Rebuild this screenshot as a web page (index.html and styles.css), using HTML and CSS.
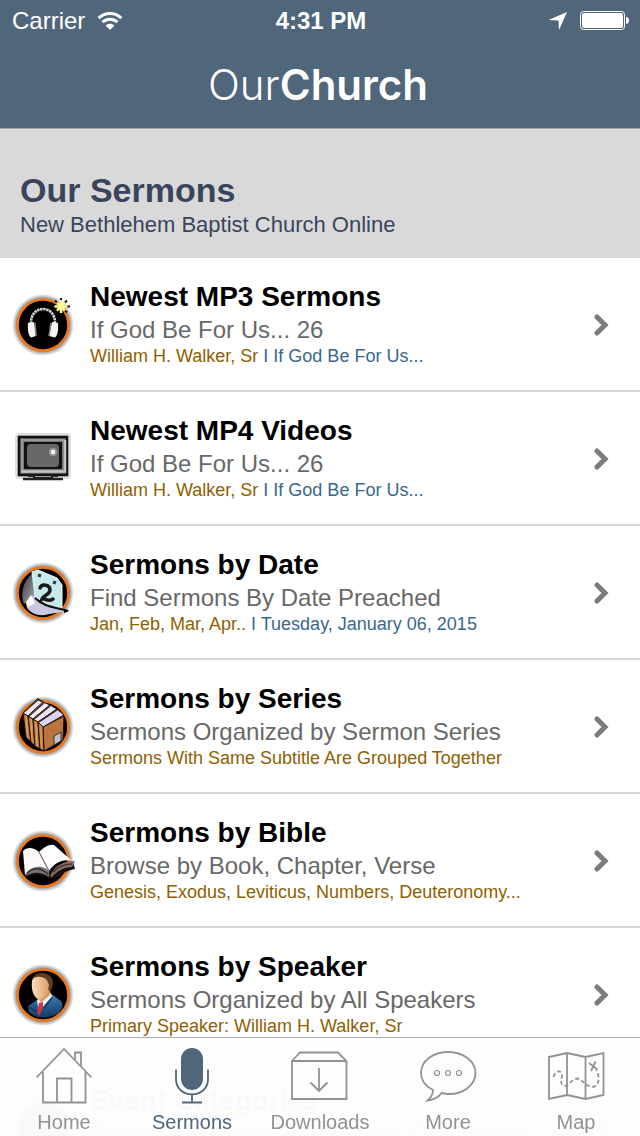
FILE: index.html
```html
<!DOCTYPE html>
<html lang="en">
<head>
  <meta charset="UTF-8">
  <meta name="viewport" content="width=device-width, initial-scale=1.0">
  <title>OurChurch - Our Sermons</title>
  <link rel="stylesheet" href="styles.css">
</head>
<body>
  <!-- shared shapes -->
  <svg class="defs" width="0" height="0" aria-hidden="true">
    <defs>
      <radialGradient id="glow">
        <stop offset="0.84" stop-color="#000" stop-opacity="0.45"/>
        <stop offset="1" stop-color="#000" stop-opacity="0"/>
      </radialGradient>
      <linearGradient id="leather" x1="0" y1="0" x2="1" y2="0">
        <stop offset="0" stop-color="#9a5c2c"/>
        <stop offset="0.5" stop-color="#dc9a5c"/>
        <stop offset="1" stop-color="#a0622f"/>
      </linearGradient>
      <linearGradient id="suit" x1="0" y1="0" x2="0" y2="1">
        <stop offset="0" stop-color="#3f83b8"/>
        <stop offset="1" stop-color="#123a63"/>
      </linearGradient>
      <linearGradient id="face" x1="0" y1="0" x2="1" y2="0">
        <stop offset="0" stop-color="#ffe0bd"/>
        <stop offset="1" stop-color="#dc9c68"/>
      </linearGradient>
      <linearGradient id="fold" x1="0" y1="0" x2="1" y2="1">
        <stop offset="0" stop-color="#3c3c40"/>
        <stop offset="1" stop-color="#a8a8ac"/>
      </linearGradient>
      <g id="badge">
        <circle cx="32" cy="33" r="31" fill="url(#glow)"/>
        <circle cx="32" cy="33" r="25.5" fill="#000" stroke="#ee7a1c" stroke-width="2.6"/>
      </g>
      <path id="chevron" d="M3 5 L11 13 L3 21" fill="none" stroke="#7b7b7b" stroke-width="5" stroke-linecap="round" stroke-linejoin="miter"/>
    </defs>
  </svg>

  <header class="header">
    <div class="status-bar">
      <div class="status-left">
        <span>Carrier</span>
        <svg width="26" height="20" viewBox="0 0 26 20" fill="none" stroke="#fff" stroke-width="3">
          <path d="M1.500 7.200 C8 0.900 18 0.900 24.500 7.200"/>
          <path d="M5.500 11.200 C9.800 7.200 16.200 7.200 20.500 11.200"/>
          <path d="M13 19 L8.500 14.500 C11 12.200 15 12.200 17.500 14.500 Z" fill="#fff" stroke="none"/>
        </svg>
      </div>
      <span class="status-time">4:31 PM</span>
      <div class="status-right">
        <svg width="20" height="20" viewBox="0 0 20 20">
          <path d="M19 1 L11 19 L10.500 9.500 L0.500 9 Z" fill="#fff"/>
        </svg>
        <svg width="50" height="20" viewBox="0 0 50 20">
          <rect x="0.500" y="0.500" width="44" height="18" rx="3" fill="none" stroke="#fff"/>
          <rect x="2" y="2" width="41" height="15" rx="2" fill="#fff"/>
          <path d="M46 6 C50 6 50 13 46 13 Z" fill="#fff"/>
        </svg>
      </div>
    </div>
    <div class="logo">Our<b>Church</b></div>
  </header>

  <main>
    <section class="page-title">
      <h1>Our Sermons</h1>
      <p>New Bethlehem Baptist Church Online</p>
    </section>

    <ul class="list">
      <li>
        <a class="row" href="#newest-mp3">
          <svg class="row-icon" viewBox="0 0 64 64">
            <use href="#badge"/>
            <path d="M20 32 C19 12 45 12 44 32" fill="none" stroke="#d8d8d8" stroke-width="2.600" stroke-dasharray="2.500 0.600"/>
            <path d="M17 31 L23 30 L25 44 L20 45.500 C17 43 16.500 37 17 31 Z" fill="#f4f4f4"/>
            <path d="M47 31 L41 30 L38 44 L44 45.500 C47 43 47.500 37 47 31 Z" fill="#f4f4f4"/>
            <path d="M24 31 L25 44 M40 31 L38 44" stroke="#888" stroke-width="1.500"/>
            <path d="M50 6 V23 M41 14.500 H59 M44 8.500 L56 20.500 M56 8.500 L44 20.500" stroke="#111" stroke-width="2"/>
            <path d="M50 8 V21 M43.500 14.500 H56.500 M46 10.500 L54 18.500 M54 10.500 L46 18.500" stroke="#fff79a" stroke-width="2.600"/>
          </svg>
          <div class="row-text">
            <h2>Newest MP3 Sermons</h2>
            <p class="subtitle">If God Be For Us... 26</p>
            <p class="meta">William H. Walker, Sr <span>I If God Be For Us...</span></p>
          </div>
          <svg class="chevron" viewBox="0 0 16 24"><use href="#chevron"/></svg>
        </a>
      </li>
      <li>
        <a class="row" href="#newest-mp4">
          <svg class="row-icon" viewBox="0 0 64 64">
            <rect x="4" y="7" width="56" height="46" rx="4" fill="#000" opacity="0.120"/>
            <rect x="8" y="11" width="48" height="38" fill="#777" stroke="#111" stroke-width="2.600"/>
            <path d="M11 47 V14 H54" fill="none" stroke="#999" stroke-width="2"/>
            <path d="M10.500 45.500 H54 V14" fill="none" stroke="#c4c4c4" stroke-width="2.500"/>
            <rect x="13" y="16" width="38" height="27" fill="#111"/>
            <rect x="16" y="18" width="32" height="23" rx="4" fill="#686868"/>
            <circle cx="42" cy="26" r="4" fill="#999"/>
            <circle cx="42" cy="26" r="2.200" fill="#fff"/>
            <path d="M17 50 H23 V52 H41 V50 H47" fill="none" stroke="#222" stroke-width="2"/>
            <path d="M12 53 H52" stroke="#222" stroke-width="2.600"/>
          </svg>
          <div class="row-text">
            <h2>Newest MP4 Videos</h2>
            <p class="subtitle">If God Be For Us... 26</p>
            <p class="meta">William H. Walker, Sr <span>I If God Be For Us...</span></p>
          </div>
          <svg class="chevron" viewBox="0 0 16 24"><use href="#chevron"/></svg>
        </a>
      </li>
      <li>
        <a class="row" href="#by-date">
          <svg class="row-icon" viewBox="0 0 64 64">
            <use href="#badge"/>
            <path d="M21 14 L24 37 L13 44 C9 34 12 21 21 14 Z" fill="url(#fold)"/>
            <path d="M15 43 L21 35 L30 42 L58 51 L38 54 C28 57 21 54 16 48 Z" fill="#c9c8e0"/>
            <path d="M15 42 L20 35 L24 43 L17 47 Z" fill="#fff"/>
            <path d="M21 12 L27 10 L46 18 L51 25 L51 49 L38 45 L24 37 Z" fill="#c6e9ec" stroke="#e8fbfb" stroke-width="1"/>
            <path d="M24 38 C33 47 43 47 57 51" fill="none" stroke="#111" stroke-width="2"/>
            <path d="M27 15 L30 16 M42 22 L45 23" stroke="#333" stroke-width="3"/>
            <path d="M29 28 C31 23 39 25 39 30 C39 35 32 35 31 39 C34 37 36 43 42 39" fill="none" stroke="#1a1a1a" stroke-width="3.500" stroke-linecap="round"/>
            <path d="M53 49 L58 51 L53 53 Z" fill="#000"/>
          </svg>
          <div class="row-text">
            <h2>Sermons by Date</h2>
            <p class="subtitle">Find Sermons By Date Preached</p>
            <p class="meta">Jan, Feb, Mar, Apr.. <span>I Tuesday, January 06, 2015</span></p>
          </div>
          <svg class="chevron" viewBox="0 0 16 24"><use href="#chevron"/></svg>
        </a>
      </li>
      <li>
        <a class="row" href="#by-series">
          <svg class="row-icon" viewBox="0 0 64 64">
            <use href="#badge"/>
            <g stroke="#241206" stroke-width="1" stroke-linejoin="round">
              <path d="M32 33 L53 22 L52 46 L33 57 Z" fill="#b87540"/>
              <path d="M12 19 L17 22 L20 48 L15 43 Z" fill="url(#leather)"/>
              <path d="M17 22 L22 25 L24 52 L20 48 Z" fill="url(#leather)"/>
              <path d="M22 25 L27 28 L29 55 L24 52 Z" fill="url(#leather)"/>
              <path d="M27 28 L32 33 L33 57 L29 55 Z" fill="url(#leather)"/>
              <path d="M12 19 L27 6 L32 8 L17 22 Z" fill="#e6e3fb"/>
              <path d="M17 22 L32 8 L39 11 L22 25 Z" fill="#f1eefc"/>
              <path d="M22 25 L39 11 L46 15 L27 28 Z" fill="#e6e3fb"/>
              <path d="M27 28 L46 15 L53 21 L32 33 Z" fill="#dad6f5"/>
            </g>
            <path d="M13 18 L27 5 L32 8 M18 22 L33 9 M23 25 L39 12 M28 28 L46 16" fill="none" stroke="#4a2a14" stroke-width="1.500"/>
            <path d="M43 42 L50 38 V47 L43 51 Z" fill="#bfc3c7" stroke="#333" stroke-width="1"/>
          </svg>
          <div class="row-text">
            <h2>Sermons by Series</h2>
            <p class="subtitle">Sermons Organized by Sermon Series</p>
            <p class="meta">Sermons With Same Subtitle Are Grouped Together</p>
          </div>
          <svg class="chevron" viewBox="0 0 16 24"><use href="#chevron"/></svg>
        </a>
      </li>
      <li>
        <a class="row" href="#by-bible">
          <svg class="row-icon" viewBox="0 0 64 64">
            <use href="#badge"/>
            <path d="M15 49 C24 45 31 47 38 51 C46 52 51 43 64 41 L62 34 L36 39 L15 40 Z" fill="#17110f"/>
            <path d="M14 48 C19 37 31 36 38 43 L38 49 C29 43 22 44 14 48 Z" fill="#777074"/>
            <path d="M39 48 C44 37 53 33 64 33 L61 39 C53 39 46 43 41 49 Z" fill="#866b64"/>
            <path d="M12 23 C17 18 23 20 28 24 L38 43 C30 36 20 38 14 47 Z" fill="#fafafa"/>
            <path d="M28 24 C33 19 38 16 43 17 L60 32 C50 32 43 35 38 43 Z" fill="#fff"/>
            <path d="M28 24 L38 43" stroke="#8b6a68" stroke-width="1.200"/>
            <path d="M16 45 C23 39 30 40 37 46 M42 44 C48 38 54 36 61 36" fill="none" stroke="#2b2523" stroke-width="1.200"/>
          </svg>
          <div class="row-text">
            <h2>Sermons by Bible</h2>
            <p class="subtitle">Browse by Book, Chapter, Verse</p>
            <p class="meta">Genesis, Exodus, Leviticus, Numbers, Deuteronomy...</p>
          </div>
          <svg class="chevron" viewBox="0 0 16 24"><use href="#chevron"/></svg>
        </a>
      </li>
      <li>
        <a class="row" href="#by-speaker">
          <svg class="row-icon" viewBox="0 0 64 64">
            <use href="#badge"/>
            <path d="M17 44 L26 38 L39 31 L50 39 C53 44 51 48 46 52 C37 57 25 57 18 50 Z" fill="url(#suit)"/>
            <path d="M26 38 L39 30 L41 34 L31 46 L28 52 Z" fill="#f3f3f5"/>
            <path d="M28 41 L32 40 L32 46 L28 54 L26 50 Z" fill="#cf3440"/>
            <path d="M26 33 L39 26 L39 33 L30 41 Z" fill="#d99c69"/>
            <path d="M21 17 C24 10 34 9 39 14 C44 18 42 25 39 30 L34 22 Z" fill="#5f3d20"/>
            <path d="M21 19 C22 14 31 13 36 18 L38 23 C37 31 32 38 27 37 C22 35 20 26 21 19 Z" fill="url(#face)"/>
            <path d="M33 46 L41 36 M18 45 L26 50" stroke="#0e2f52" stroke-width="1.200"/>
          </svg>
          <div class="row-text">
            <h2>Sermons by Speaker</h2>
            <p class="subtitle">Sermons Organized by All Speakers</p>
            <p class="meta">Primary Speaker: William H. Walker, Sr</p>
          </div>
          <svg class="chevron" viewBox="0 0 16 24"><use href="#chevron"/></svg>
        </a>
      </li>
      <li>
        <a class="row" href="#by-event">
          <svg class="row-icon" viewBox="0 0 64 64"><use href="#badge"/></svg>
          <div class="row-text">
            <h2>Event Categories</h2>
            <p class="subtitle">Sermons Organized by Event Categories</p>
          </div>
          <svg class="chevron" viewBox="0 0 16 24"><use href="#chevron"/></svg>
        </a>
      </li>
    </ul>
  </main>

  <nav class="tab-bar">
    <a href="#home">
      <svg viewBox="0 0 60 60">
        <path d="M2.500 31.500 L30 3 L57.500 31.500"/>
        <path d="M9 26 V56.500 H51.500 V26"/>
        <path d="M23 56 V32.500 H37.500 V56"/>
        <path d="M41 13.500 V6.500 H47 V20"/>
      </svg>
      Home
    </a>
    <a class="active" href="#sermons">
      <svg viewBox="0 0 60 60">
        <rect class="solid" x="19" y="2" width="22" height="42" rx="11"/>
        <path d="M14 23.500 V33 C14 53.500 46 53.500 46 33 V23.500"/>
        <path d="M30 48.500 V56.500 M20 56.500 H40"/>
      </svg>
      Sermons
    </a>
    <a href="#downloads">
      <svg viewBox="0 0 60 60">
        <path d="M2 15 L10 6.500 H48 L56.500 15 V53 H2 Z M2 15 H56.500"/>
        <path d="M29 22 V45 M20.500 36.500 L29 45 L37.500 36.500"/>
      </svg>
      Downloads
    </a>
    <a href="#more">
      <svg viewBox="0 0 60 60">
        <path d="M15 44 C7 40 3 34 3 27 C3 15 15 6 30 6 C45 6 57.500 15 57.500 27 C57.500 39 45 48.500 30 48 C28 48 26 47.500 23.500 47 C20 52 15 54 9.500 54.500 C13 51.500 15 48 15 44 Z"/>
        <g stroke-width="1.200">
          <circle class="dot" cx="19" cy="27" r="2.500"/>
          <circle class="dot" cx="30" cy="27" r="2.500"/>
          <circle class="dot" cx="41" cy="27" r="2.500"/>
        </g>
      </svg>
      More
    </a>
    <a href="#map">
      <svg viewBox="0 0 60 60">
        <path d="M3 11 L21 7 L39.500 11 L57.500 7 V49 L39.500 53 L21 49 L3 53 Z M21 7 V49 M39.500 11 V53"/>
        <path d="M43 17 L51.500 23.500 M49.500 15.500 L45 25"/>
        <path stroke-dasharray="4 2.500" d="M7.500 31 C9 25 15 23 16 29 C16 33 13 38 18 40 C24 40 25 33 31 32.500 C36 33 38 39 46 41 C54 41 54 29 50 24"/>
      </svg>
      Map
    </a>
  </nav>
</body>
</html>
```
FILE: styles.css
```css
* {
  box-sizing: border-box;
}
body {
  margin: 0;
  height: 100vh;
  display: flex;
  flex-direction: column;
  overflow: hidden;
  font-family: "Liberation Sans", Helvetica, Arial, sans-serif;
  background-color: #fff;
}
h1, h2, p, ul {
  margin: 0;
  padding: 0;
}
a {
  text-decoration: none;
}
svg {
  display: block;
}
.defs {
  position: absolute;
}

/* header */
.header {
  flex: none;
  color: #fff;
  background-color: #50667b;
  border-bottom: 1px solid #a3a3a3;
}
.status-bar {
  display: grid;
  grid-template-columns: 1fr auto 1fr;
  align-items: center;
  padding: 7px 10px 0 12px;
  font-size: 24px;
  line-height: 28px;
}
.status-left, .status-right {
  display: flex;
  align-items: center;
  gap: 12px;
}
.status-right {
  justify-content: flex-end;
}
.status-time {
  font-weight: bold;
}
.logo {
  padding: 25px 4px 18px 0;
  font-family: Inter, sans-serif;
  font-size: 42px;
  font-weight: 300;
  line-height: 50px;
  text-align: center;
}
.logo b {
  font-weight: 600;
}

/* content */
main {
  flex: 1;
  min-height: 0;
  overflow-y: auto;
  scrollbar-width: none;
}
.page-title {
  padding: 41px 20px 18px;
  color: #3a455c;
  background-color: #d9d9d9;
}
.page-title h1 {
  font-size: 34px;
  line-height: 40px;
}
.page-title p {
  font-size: 22px;
  line-height: 30px;
}
.list {
  list-style: none;
}
.row {
  display: flex;
  align-items: center;
  gap: 15px;
  padding: 0 30px 0 11px;
  border-bottom: 2px solid #d8d8d8;
}
.row-icon {
  flex: none;
  width: 64px;
  height: 64px;
  overflow: visible;
}
.row-text {
  flex: 1;
  min-height: 132px;
  padding: 22px 0 24px;
}
.row-text h2 {
  color: #000;
  font-size: 28px;
  line-height: 34px;
}
.subtitle {
  color: #686868;
  font-size: 24px;
  line-height: 32px;
}
.meta {
  color: #8f5f00;
  font-size: 18px;
  line-height: 20px;
}
.meta span {
  color: #39678d;
}
.chevron {
  flex: none;
  width: 16px;
  height: 24px;
}

/* bottom tabs, translucent over the list */
.tab-bar {
  position: fixed;
  left: 0;
  right: 0;
  bottom: 0;
  display: flex;
  padding: 8px 0 2px;
  background-color: rgba(253, 253, 253, 0.985);
  border-top: 1px solid #adadad;
}
.tab-bar a {
  flex: 1 1 0;
  display: flex;
  flex-direction: column;
  align-items: center;
  gap: 4px;
  color: #929292;
  font-size: 20px;
  line-height: 24px;
}
.tab-bar .active {
  color: #50667b;
}
.tab-bar svg {
  width: 60px;
  height: 60px;
  fill: none;
  stroke: currentColor;
  stroke-width: 1.8;
}
.tab-bar .solid {
  fill: currentColor;
  stroke: none;
}
```
